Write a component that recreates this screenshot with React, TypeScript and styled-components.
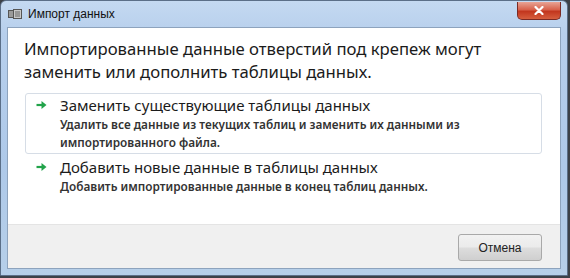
import React from "react"
import styled, { createGlobalStyle } from "styled-components"

const Global = createGlobalStyle`
  html, body {
    margin: 0;
    padding: 0;
    background: #3c4148;
  }
  body {
    font-family: "Noto Sans", "Open Sans", sans-serif;
  }
`

const Frame = styled.div`
  width: 568px;
  height: 276px;
  box-sizing: border-box;
  border: 1px solid #5b6f88;
  border-radius: 6px 6px 0 0;
  background: linear-gradient(180deg, #c4d9f1 0%, #b7cfec 12%, #aec9e9 60%, #b6cfe9 100%);
  padding: 0 6px 6px 6px;
  display: flex;
  flex-direction: column;
`

const TitleBar = styled.div`
  height: 26px;
  display: flex;
  align-items: center;
  justify-content: space-between;
`

const Title = styled.div`
  display: flex;
  align-items: center;
  gap: 6px;
  font-family: "Liberation Sans", sans-serif;
  font-size: 12px;
  color: #111;
  padding-left: 1px;
`

const CloseButton = styled.div`
  width: 44px;
  height: 18px;
  margin-top: -7px;
  box-sizing: border-box;
  border: 1px solid #7a2a24;
  border-top: none;
  border-radius: 0 0 5px 5px;
  background: linear-gradient(180deg, #e8a495 0%, #d8624c 45%, #c2361e 55%, #d65e3e 100%);
  display: flex;
  align-items: center;
  justify-content: center;
`

const Client = styled.div`
  flex: 1;
  background: #fff;
  border: 1px solid #8da3bd;
  display: flex;
  flex-direction: column;
`

const Content = styled.div`
  flex: 1;
  padding: 9px 18px 0 16px;
  display: flex;
  flex-direction: column;
`

const Instruction = styled.div`
  font-size: 16.7px;
  line-height: 23px;
  color: #1b1b1b;
  margin-bottom: 10px;
  white-space: nowrap;
`

const CommandLink = styled.div<{ $active?: boolean }>`
  display: flex;
  gap: 13px;
  padding: 1px 10px 2px 10px;
  margin-left: 1px;
  border: 1px solid ${(p) => (p.$active ? "#d6dde6" : "transparent")};
  border-radius: 3px;
  margin-bottom: 1px;
`

const Arrow = styled.div`
  width: 11px;
  height: 20px;
  display: flex;
  align-items: center;
  flex-shrink: 0;
`

const LinkText = styled.div`
  display: flex;
  flex-direction: column;
`

const LinkTitle = styled.div`
  font-size: 15px;
  line-height: 20px;
  color: #1b1b1b;
`

const LinkDesc = styled.div`
  font-size: 11.8px;
  line-height: 18px;
  font-weight: 600;
  color: #333;
  max-width: 430px;
`

const Footer = styled.div`
  height: 43px;
  background: #f0f0f0;
  border-top: 1px solid #e4e4e4;
  display: flex;
  align-items: center;
  justify-content: flex-end;
  padding-right: 18px;
`

const Button = styled.div`
  width: 84px;
  height: 27px;
  box-sizing: border-box;
  border: 1px solid #a9a9a9;
  border-radius: 3px;
  background: linear-gradient(180deg, #f2f2f2 0%, #ebebeb 48%, #dddddd 52%, #cfcfcf 100%);
  display: flex;
  align-items: center;
  justify-content: center;
  font-family: "Liberation Sans", sans-serif;
  font-size: 12px;
  color: #222;
  margin-top: 2px;
`

const GreenArrow = () => (
  <svg width="11" height="10" viewBox="0 0 11 10">
    <path d="M0.5 5 H7" stroke="#22a34a" strokeWidth="2.2" />
    <path d="M5.5 1 L10.5 5 L5.5 9 Z" fill="#22a34a" />
  </svg>
)

const AppIcon = () => (
  <svg width="14" height="12" viewBox="0 0 14 12">
    <rect x="0.5" y="2.5" width="6" height="7" fill="#9a9a9a" stroke="#555" />
    <rect x="5.5" y="1.5" width="8" height="9" fill="#c8c8c8" stroke="#555" />
    <path d="M7 4 H12 M7 6 H12 M7 8 H12" stroke="#666" />
  </svg>
)

const App: React.FC = () => {
  return (
    <>
      <Global />
      <Frame>
        <TitleBar>
          <Title>
            <AppIcon />
            <span>Импорт данных</span>
          </Title>
          <CloseButton>
            <svg width="10" height="9" viewBox="0 0 10 9">
              <path d="M1.5 1 L8.5 8 M8.5 1 L1.5 8" stroke="#fff" strokeWidth="2.2" strokeLinecap="round" />
            </svg>
          </CloseButton>
        </TitleBar>
        <Client>
          <Content>
            <Instruction>
              Импортированные данные отверстий под крепеж могут
              <br />
              заменить или дополнить таблицы данных.
            </Instruction>
            <CommandLink $active>
              <Arrow>
                <GreenArrow />
              </Arrow>
              <LinkText>
                <LinkTitle>Заменить существующие таблицы данных</LinkTitle>
                <LinkDesc>
                  Удалить все данные из текущих таблиц и заменить их данными из импортированного файла.
                </LinkDesc>
              </LinkText>
            </CommandLink>
            <CommandLink>
              <Arrow>
                <GreenArrow />
              </Arrow>
              <LinkText>
                <LinkTitle>Добавить новые данные в таблицы данных</LinkTitle>
                <LinkDesc>Добавить импортированные данные в конец таблиц данных.</LinkDesc>
              </LinkText>
            </CommandLink>
          </Content>
          <Footer>
            <Button>Отмена</Button>
          </Footer>
        </Client>
      </Frame>
    </>
  )
}

export default App
